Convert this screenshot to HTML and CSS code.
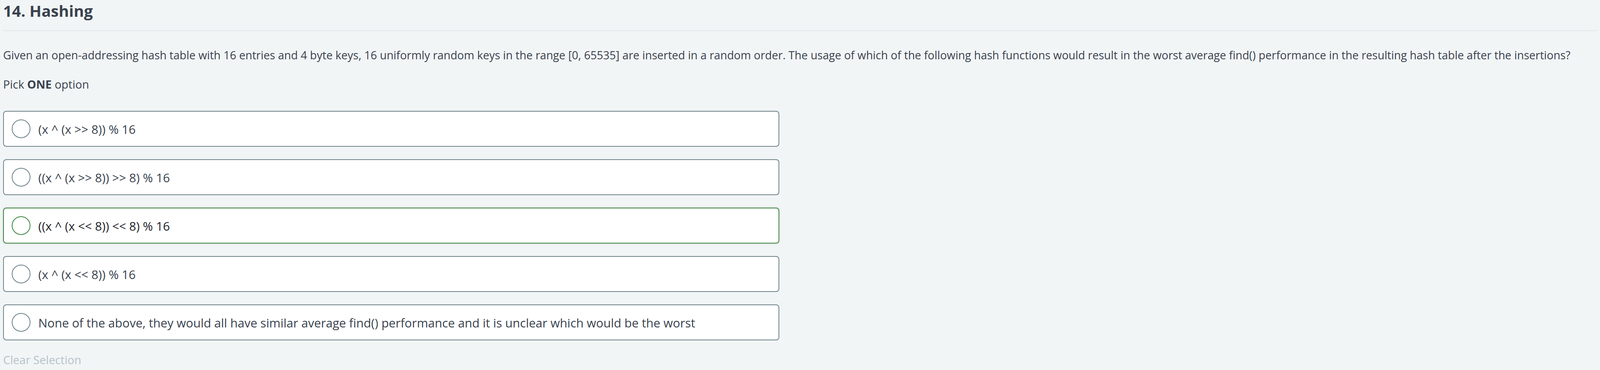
FILE: index.html
```html
<!DOCTYPE html>
<html lang="en">
<head>
<meta charset="utf-8">
<title>14. Hashing</title>
<link rel="stylesheet" href="styles.css">
</head>
<body>
<main class="question">
  <h1 class="q-title">14. Hashing</h1>
  <p class="q-text">Given an open-addressing hash table with 16 entries and 4 byte keys, 16 uniformly random keys in the range [0, 65535] are inserted in a random order. The usage of which of the following hash functions would result in the worst average find() performance in the resulting hash table after the insertions?</p>
  <p class="q-hint">Pick <strong>ONE</strong> option</p>
  <ul class="options">
    <li class="option"><span class="radio"></span><span class="label">(x ^ (x &gt;&gt; 8)) % 16</span></li>
    <li class="option"><span class="radio"></span><span class="label">((x ^ (x &gt;&gt; 8)) &gt;&gt; 8) % 16</span></li>
    <li class="option option-hover"><span class="radio"></span><span class="label">((x ^ (x &lt;&lt; 8)) &lt;&lt; 8) % 16</span></li>
    <li class="option"><span class="radio"></span><span class="label">(x ^ (x &lt;&lt; 8)) % 16</span></li>
    <li class="option"><span class="radio"></span><span class="label">None of the above, they would all have similar average find() performance and it is unclear which would be the worst</span></li>
  </ul>
  <div class="clear">Clear Selection</div>
</main>
</body>
</html>
```

FILE: styles.css
```css
html, body {
  margin: 0;
  padding: 0;
  background: #f2f5f6;
}

body {
  font-family: "Open Sans", "Liberation Sans", sans-serif;
  color: #39424e;
}

.question {
  padding: 0 8px;
}

.q-title {
  margin: 0;
  padding-top: 1px;
  padding-bottom: 22px;
  font-size: 40px;
  font-weight: 700;
  line-height: 54px;
  border-bottom: 3px solid #e5e9eb;
}

.q-text {
  margin: 42px 0 0;
  font-size: 28.5px;
  line-height: 38px;
  white-space: nowrap;
}

.q-hint {
  margin: 37px 0 0;
  font-size: 29px;
  line-height: 38px;
}

.q-hint strong {
  font-weight: 700;
}

.options {
  list-style: none;
  margin: 49px 0 0;
  padding: 0;
  display: flex;
  flex-direction: column;
  gap: 32px;
  width: 1987px;
}

.option {
  box-sizing: border-box;
  height: 92px;
  display: flex;
  align-items: center;
  gap: 20px;
  padding: 0 20px;
  background: #ffffff;
  border: 2px solid #6c8288;
  border-radius: 8px;
  font-size: 31px;
}

.radio {
  box-sizing: border-box;
  flex: none;
  width: 48px;
  height: 48px;
  border: 2px solid #6c8288;
  border-radius: 50%;
  background: #ffffff;
}

.label {
  line-height: 40px;
  padding-top: 2px;
}

.option-hover {
  border-color: #39843c;
  box-shadow: 0 0 6px rgba(0, 0, 0, 0.12);
  color: #1e2329;
}

.option-hover .radio {
  border-color: #39843c;
}

.clear {
  margin-top: 31px;
  font-size: 29px;
  line-height: 38px;
  color: #b4c3c8;
}
```
